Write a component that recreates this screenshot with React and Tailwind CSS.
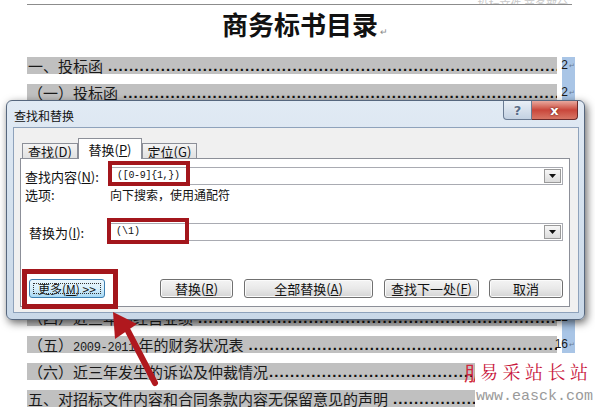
import React from "react";

const cjk = "font-['Noto_Sans_CJK_SC',sans-serif]";

const rows = [
  { t: "一、投标函", n: "2", h: "h-[27px]", blue: true },
  { t: "（一）投标函", n: "2", h: "h-[36px]", blue: true },
  { t: "（二）法定代表人身份证明", n: "3", h: "h-[27px]", blue: true },
  { t: "（三）授权委托书", n: "4", h: "h-[27px]", blue: true },
  { t: "二、投标保证金", n: "5", h: "h-[27px]", blue: true },
  { t: "三、商务偏离表", n: "6", h: "h-[27px]", blue: true },
  { t: "四、资格证明文件", n: "7", h: "h-[27px]", blue: true },
  { t: "（一）营业执照副本复印件", n: "8", h: "h-[27px]", blue: true },
  { t: "（二）税务登记证副本复印件", n: "9", h: "h-[27px]", blue: true },
  { t: "（四）近三年的经营业绩", n: "12", h: "h-[27px]", blue: true },
  { t: "（五）", d: "2009-2011", t2: " 年的财务状况表", n: "16", h: "h-[27px]", blue: true },
  { t: "（六）近三年发生的诉讼及仲裁情况", n: "17", h: "h-[27px]", blue: false, nodot: true },
  { t: "五、对招标文件内容和合同条款内容无保留意见的声明", n: "18", h: "h-[23px]", blue: false },
];

const DOTS = ".".repeat(160);

function Row({ r }) {
  return (
    <div className={`flex ${r.h}`}>
      <div className="w-[530px] h-[17px] bg-[#c0c0c0] flex items-start overflow-hidden">
        <span className={`${cjk} text-[15px] leading-[17px] text-[#1a1a1a] whitespace-nowrap pl-[1px]`}>
          {r.t}
          {r.d && (
            <span className="font-['Liberation_Mono',monospace] text-[12px] tracking-[-0.3px]">{r.d}</span>
          )}
          {r.t2}
        </span>
        <span
          className={`flex-1 overflow-hidden whitespace-nowrap font-['Liberation_Sans',sans-serif] font-bold text-[15px] leading-[17px] tracking-[1.1px] text-[#111] ${
            r.nodot ? "pl-[1px]" : "pl-[5px]"
          }`}
        >
          {DOTS}
        </span>
      </div>
      <div className={`ml-[5px] w-[13px] flex justify-end items-start ${r.blue ? "bg-[#a9c5e6]" : ""}`}>
        <span className="font-['Liberation_Sans',sans-serif] text-[12px] leading-[17px] text-[#1a1a1a] whitespace-nowrap">
          {r.n}
        </span>
        <span className="text-[7px] leading-[17px] text-[#6b7c93] pl-[1px]">↵</span>
      </div>
    </div>
  );
}

function DropBtn() {
  return (
    <div className="w-[17px] h-[14px] mr-[1px] border border-[#9a9a9a] bg-linear-to-b from-[#f7f7f7] to-[#dcdcdc] flex items-center justify-center">
      <svg width="7" height="4" viewBox="0 0 7 4">
        <path d="M0 0 L7 0 L3.5 4 Z" fill="#111" />
      </svg>
    </div>
  );
}

function Btn({ w, children }) {
  return (
    <div
      className={`${w} h-[19px] rounded-[3px] border border-[#707070] bg-linear-to-b from-[#f4f4f4] via-[#e9e9e9] to-[#d4d4d4] flex items-center justify-center ${cjk} text-[13px] leading-[15px] text-[#111] shadow-[inset_0_0_0_1px_#fbfbfb]`}
    >
      {children}
    </div>
  );
}

export default function App() {
  return (
    <div className="relative w-[595px] h-[413px] overflow-hidden bg-white">
      {/* document */}
      <div className="pl-[27px]">
        <div className="w-[545px] h-[5px] border-b border-[#8c8c8c] flex justify-end items-end overflow-hidden">
          <span className={`${cjk} text-[11px] leading-[11px] text-[#c9c9c9] mr-[4px] translate-y-[6px]`}>
            投标文件 商务部分
          </span>
        </div>
        <div className="mt-[4px] w-[548px] flex justify-center items-end pl-[8px]">
          <span className={`${cjk} text-[26px] leading-[30px] font-bold text-[#111]`}>商务标书目录</span>
          <span className="text-[9px] leading-[14px] text-[#888] ml-[2px]">↵</span>
        </div>
        <div className="mt-[18px] flex flex-col">
          {rows.map((r, i) => (
            <Row key={i} r={r} />
          ))}
        </div>
      </div>

      {/* dialog */}
      <div className="absolute left-[6px] top-[100px] w-[579px] h-[220px] rounded-[6px] border border-[#56677e] bg-linear-to-b from-[#e1eaf4] via-[#d4e1ee] to-[#c9d8e8] shadow-[2px_3px_9px_rgba(0,0,0,0.6)] flex flex-col">
        <div className="h-[26px] flex items-start">
          <span className={`${cjk} ml-[7px] mt-[8px] text-[12px] leading-[14px] text-[#111]`}>查找和替换</span>
          <div className="flex-1" />
          <div className="w-[29px] h-[19px] rounded-bl-[4px] border border-t-0 border-[#6a7b93] bg-linear-to-b from-[#e9eff6] to-[#c3d1e2] flex items-center justify-center">
            <span className="font-['DejaVu_Sans',sans-serif] text-[13px] leading-[13px] font-bold text-[#5a6d88] [text-shadow:0_0_2px_#fff]">
              ?
            </span>
          </div>
          <div className="w-[46px] h-[19px] mr-[6px] rounded-br-[4px] border border-l-0 border-t-0 border-[#6b2a2a] bg-linear-to-b from-[#e8a89e] via-[#c9463b] to-[#d77565] flex items-center justify-center">
            <span className="font-['DejaVu_Sans',sans-serif] text-[13px] leading-[13px] font-bold text-white [text-shadow:0_0_2px_#4a0f0f]">
              x
            </span>
          </div>
        </div>
        <div className="ml-[6px] mr-[5px] mb-[6px] flex-1 border border-[#8ea2bb] bg-[#f0f0f0] pl-[6px] pt-[10px] pr-[8px] pb-[5px] flex flex-col">
          {/* tabs */}
          <div className="h-[20px] flex items-end pl-[2px]">
            <div className={`w-[56px] h-[15px] border border-b-0 border-[#8c8f98] bg-linear-to-b from-[#f4f4f4] to-[#e1e1e1] flex items-center justify-center ${cjk} text-[13px] leading-[13px] text-[#111]`}>
              查找(<span className="underline">D</span>)
            </div>
            <div className={`relative z-10 -mb-[1px] w-[64px] h-[21px] border border-b-0 border-[#8c8f98] bg-white flex items-center justify-center ${cjk} text-[13px] leading-[13px] text-[#111]`}>
              替换(<span className="underline">P</span>)
            </div>
            <div className={`w-[55px] h-[15px] border border-b-0 border-[#8c8f98] bg-linear-to-b from-[#f4f4f4] to-[#e1e1e1] flex items-center justify-center ${cjk} text-[13px] leading-[13px] text-[#111]`}>
              定位(<span className="underline">G</span>)
            </div>
          </div>
          {/* panel */}
          <div className="flex-1 border border-[#8c8f98] bg-white pl-[4px] pt-[8px] pr-[6px] pb-[8px] flex flex-col">
            <div className="h-[18px] flex items-center">
              <span className={`w-[85px] ${cjk} text-[13px] leading-[15px] text-[#111]`}>
                查找内容(<span className="underline">N</span>):
              </span>
              <div className="flex-1 h-[18px] border border-[#a9abb2] bg-white flex items-center">
                <span className="flex-1 pl-[6px] font-['Liberation_Mono',monospace] text-[10px] leading-[12px] text-[#111] tracking-[-0.3px]">
                  ([0-9]{"{"}1,{"}"})
                </span>
                <DropBtn />
              </div>
            </div>
            <div className="mt-[3px] h-[14px] flex items-center">
              <span className={`w-[85px] ${cjk} text-[13px] leading-[14px] text-[#111]`}>选项:</span>
              <span className={`${cjk} text-[12px] leading-[14px] text-[#111]`}>向下搜索，使用通配符</span>
            </div>
            <div className="mt-[21px] h-[18px] flex items-center">
              <span className={`w-[85px] pl-[4px] ${cjk} text-[13px] leading-[15px] text-[#111]`}>
                替换为(<span className="underline">I</span>):
              </span>
              <div className="flex-1 h-[18px] border border-[#a9abb2] bg-white flex items-center">
                <span className="flex-1 pl-[5px] font-['Liberation_Mono',monospace] text-[10px] leading-[12px] text-[#111]">
                  (\1)
                </span>
                <DropBtn />
              </div>
            </div>
            <div className="mt-auto h-[19px] flex items-center">
              <div className="ml-[4px] relative w-[76px] h-[19px] rounded-[3px] border border-[#3c7fb1] bg-linear-to-b from-[#eaf6fd] via-[#d9f0fc] to-[#a7d9f5] flex items-center justify-center">
                <span className="absolute inset-[3px] border border-dotted border-[#333]" />
                <span className={`${cjk} text-[12px] leading-[14px] text-[#111] whitespace-nowrap`}>
                  更多(<span className="underline">M</span>) &gt;&gt;
                </span>
              </div>
              <div className="ml-auto flex items-center">
                <Btn w="w-[73px]">
                  替换(<span className="underline">R</span>)
                </Btn>
                <div className="w-[11px]" />
                <Btn w="w-[129px]">
                  全部替换(<span className="underline">A</span>)
                </Btn>
                <div className="w-[11px]" />
                <Btn w="w-[95px]">
                  查找下一处(<span className="underline">F</span>)
                </Btn>
                <div className="w-[10px]" />
                <Btn w="w-[74px]">取消</Btn>
              </div>
            </div>
          </div>
        </div>
      </div>

      {/* red annotation boxes */}
      <div className="absolute left-[108px] top-[161px] w-[82px] h-[25px] border-[4px] border-[#a3161c]" />
      <div className="absolute left-[107px] top-[218px] w-[82px] h-[26px] border-[4px] border-[#a3161c]" />
      <div className="absolute left-[22px] top-[269px] w-[96px] h-[40px] border-[5px] border-[#a3161c]" />

      {/* arrow */}
      <svg className="absolute left-0 top-0" width="595" height="413" viewBox="0 0 595 413">
        <path d="M155 383 L128 331" stroke="#b0181e" strokeWidth="6" strokeLinecap="round" />
        <polygon points="113,312 137,324 115,339" fill="#b0181e" />
      </svg>

      {/* watermark */}
      <div className="absolute left-[475px] top-[353px] w-[120px] h-[60px] bg-white">
        <div className="mt-[7px] ml-[5px] font-['Noto_Serif_CJK_SC','Noto_Sans_CJK_SC',serif] text-[18px] leading-[22px] tracking-[4.5px] text-[#c8143a] whitespace-nowrap">
          易采站长站
        </div>
        <div className="mt-[7px] ml-[1px] font-['Liberation_Mono',monospace] text-[15px] leading-[16px] text-[#9a9a9a] whitespace-nowrap">
          www.easck.com
        </div>
      </div>
      <span className={`absolute left-[464px] top-[362px] ${cjk} text-[20px] leading-[22px] text-[#d0283c] w-[11px] overflow-hidden`}>
        朋
      </span>
    </div>
  );
}
